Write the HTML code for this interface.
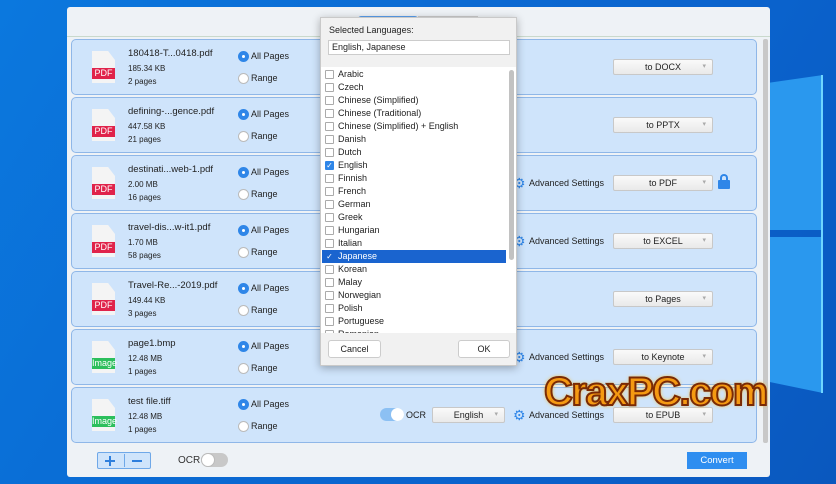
<!DOCTYPE html>
<html><head><meta charset="utf-8"><style>
*{box-sizing:border-box;margin:0;padding:0}
body{width:836px;height:484px;overflow:hidden;position:relative;font-family:"Liberation Sans",sans-serif;background:linear-gradient(120deg,#0b78de 0%,#0a6ad3 40%,#0a62cc 70%,#0a58be 100%)}
.a{position:absolute}
.win{left:67px;top:7px;width:703px;height:470px;background:#eef2f6;border-radius:3px}
.row{left:71px;width:686px;height:56px;background:#cfe4fb;border:1px solid #8fb7e8;border-radius:5px}
.doc{width:23px;height:32px;background:#f4f4f4;clip-path:polygon(0 0,70% 0,100% 28%,100% 100%,0 100%)}
.lbl{width:23px;height:11px;color:#fff;font-size:9px;line-height:11px;text-align:center}
.fn{font-size:9.5px;color:#222}
.sm{font-size:8px;color:#222}
.rad{width:11px;height:11px;border-radius:50%;background:#fff;border:1px solid #bbb}
.rad.on{background:#2f86e8;border-color:#2f86e8}
.rad.on::after{content:"";position:absolute;left:3px;top:3px;width:3px;height:3px;border-radius:50%;background:#fff}
.rt{font-size:9px;color:#222}
.dd{width:100px;height:16px;background:linear-gradient(#fafafa,#e9e9e9);border:1px solid #c8c8c8;border-radius:2px;font-size:9px;text-align:center;line-height:14px;color:#222}
.dd::after{content:"▾";position:absolute;right:6px;top:0;font-size:7px;color:#aaa}
.gear{width:12px;height:12px;color:#2f86e8;font-size:14px;line-height:12px}
.adv{font-size:9px;color:#222}
.pop{left:320px;top:17px;width:197px;height:349px;background:#f1f1f1;border:1px solid #c9c9c9;box-shadow:0 2px 8px rgba(0,0,0,.3)}
.it{left:1px;width:184px;height:13px;font-size:9px;line-height:13px;color:#222;padding-left:16px}
.it i{position:absolute;left:3px;top:2px;width:9px;height:9px;border:1px solid #aaa;background:#fff;border-radius:1px;font-style:normal}
.btn{height:18px;background:#fff;border:1px solid #ccc;border-radius:3px;font-size:9px;text-align:center;line-height:16px;color:#222}
</style></head><body>
<div class="a" style="left:760px;top:0;width:63px;height:400px;background:#2a98ee;clip-path:polygon(0 84px,100% 75px,100% 230px,0 230px,0 237px,100% 237px,100% 393px,0 380px)"></div>
<div class="a" style="left:821px;top:75px;width:2px;height:318px;background:#6fd6ff"></div>
<div class="a win"></div>
<div class="a" style="left:67px;top:36px;width:703px;height:1px;background:#c9d9cc"></div>
<div class="a" style="left:763px;top:39px;width:5px;height:404px;background:#c8c8c8;border-radius:2px"></div>
<div class="a" style="left:358px;top:16px;width:60px;height:6px;background:#5aa0ee;border-radius:3px 3px 0 0"></div>
<div class="a" style="left:418px;top:16px;width:60px;height:6px;background:#fff;border:1px solid #ccc"></div>

<div class="a row" style="top:39px"></div><div class="a row" style="top:97px"></div><div class="a row" style="top:155px"></div><div class="a row" style="top:213px"></div><div class="a row" style="top:271px"></div><div class="a row" style="top:329px"></div><div class="a row" style="top:387px"></div>

<div class="a doc" style="left:92px;top:51px"></div><div class="a lbl" style="left:92px;top:68px;background:#e0234a">PDF</div>
<div class="a fn" style="left:128px;top:48px">180418-T...0418.pdf</div><div class="a sm" style="left:128px;top:64px">185.34 KB</div><div class="a sm" style="left:128px;top:77px">2 pages</div>
<div class="a doc" style="left:92px;top:109px"></div><div class="a lbl" style="left:92px;top:126px;background:#e0234a">PDF</div>
<div class="a fn" style="left:128px;top:106px">defining-...gence.pdf</div><div class="a sm" style="left:128px;top:122px">447.58 KB</div><div class="a sm" style="left:128px;top:135px">21 pages</div>
<div class="a doc" style="left:92px;top:167px"></div><div class="a lbl" style="left:92px;top:184px;background:#e0234a">PDF</div>
<div class="a fn" style="left:128px;top:164px">destinati...web-1.pdf</div><div class="a sm" style="left:128px;top:180px">2.00 MB</div><div class="a sm" style="left:128px;top:193px">16 pages</div>
<div class="a doc" style="left:92px;top:225px"></div><div class="a lbl" style="left:92px;top:242px;background:#e0234a">PDF</div>
<div class="a fn" style="left:128px;top:222px">travel-dis...w-it1.pdf</div><div class="a sm" style="left:128px;top:238px">1.70 MB</div><div class="a sm" style="left:128px;top:251px">58 pages</div>
<div class="a doc" style="left:92px;top:283px"></div><div class="a lbl" style="left:92px;top:300px;background:#e0234a">PDF</div>
<div class="a fn" style="left:128px;top:280px">Travel-Re...-2019.pdf</div><div class="a sm" style="left:128px;top:296px">149.44 KB</div><div class="a sm" style="left:128px;top:309px">3 pages</div>
<div class="a doc" style="left:92px;top:341px"></div><div class="a lbl" style="left:92px;top:358px;background:#2cbf5c">Image</div>
<div class="a fn" style="left:128px;top:338px">page1.bmp</div><div class="a sm" style="left:128px;top:354px">12.48 MB</div><div class="a sm" style="left:128px;top:367px">1 pages</div>
<div class="a doc" style="left:92px;top:399px"></div><div class="a lbl" style="left:92px;top:416px;background:#2cbf5c">Image</div>
<div class="a fn" style="left:128px;top:396px">test file.tiff</div><div class="a sm" style="left:128px;top:412px">12.48 MB</div><div class="a sm" style="left:128px;top:425px">1 pages</div>

<div class="a rad on" style="left:238px;top:51px"></div><div class="a rt" style="left:251px;top:51px">All Pages</div><div class="a rad" style="left:238px;top:73px"></div><div class="a rt" style="left:251px;top:73px">Range</div>
<div class="a rad on" style="left:238px;top:109px"></div><div class="a rt" style="left:251px;top:109px">All Pages</div><div class="a rad" style="left:238px;top:131px"></div><div class="a rt" style="left:251px;top:131px">Range</div>
<div class="a rad on" style="left:238px;top:167px"></div><div class="a rt" style="left:251px;top:167px">All Pages</div><div class="a rad" style="left:238px;top:189px"></div><div class="a rt" style="left:251px;top:189px">Range</div>
<div class="a rad on" style="left:238px;top:225px"></div><div class="a rt" style="left:251px;top:225px">All Pages</div><div class="a rad" style="left:238px;top:247px"></div><div class="a rt" style="left:251px;top:247px">Range</div>
<div class="a rad on" style="left:238px;top:283px"></div><div class="a rt" style="left:251px;top:283px">All Pages</div><div class="a rad" style="left:238px;top:305px"></div><div class="a rt" style="left:251px;top:305px">Range</div>
<div class="a rad on" style="left:238px;top:341px"></div><div class="a rt" style="left:251px;top:341px">All Pages</div><div class="a rad" style="left:238px;top:363px"></div><div class="a rt" style="left:251px;top:363px">Range</div>
<div class="a rad on" style="left:238px;top:399px"></div><div class="a rt" style="left:251px;top:399px">All Pages</div><div class="a rad" style="left:238px;top:421px"></div><div class="a rt" style="left:251px;top:421px">Range</div>

<div class="a dd" style="left:613px;top:59px">to DOCX</div>
<div class="a dd" style="left:613px;top:117px">to PPTX</div>
<div class="a dd" style="left:613px;top:175px">to PDF</div>
<div class="a dd" style="left:613px;top:233px">to EXCEL</div>
<div class="a dd" style="left:613px;top:291px">to Pages</div>
<div class="a dd" style="left:613px;top:349px">to Keynote</div>
<div class="a dd" style="left:613px;top:407px">to EPUB</div>
<div class="a" style="left:718px;top:180px;width:12px;height:9px;background:#2f86e8;border-radius:1px"></div>
<div class="a" style="left:720px;top:174px;width:8px;height:8px;border:2px solid #2f86e8;border-bottom:none;border-radius:4px 4px 0 0"></div>

<div class="a gear" style="left:513px;top:177px">⚙</div><div class="a adv" style="left:529px;top:178px">Advanced Settings</div>
<div class="a gear" style="left:513px;top:235px">⚙</div><div class="a adv" style="left:529px;top:236px">Advanced Settings</div>
<div class="a gear" style="left:513px;top:351px">⚙</div><div class="a adv" style="left:529px;top:352px">Advanced Settings</div>
<div class="a gear" style="left:513px;top:409px">⚙</div><div class="a adv" style="left:529px;top:410px">Advanced Settings</div>

<div class="a" style="left:380px;top:408px;width:24px;height:13px;border-radius:7px;background:#8cc0f3"></div>
<div class="a" style="left:391px;top:408px;width:13px;height:13px;border-radius:50%;background:#fff"></div>
<div class="a rt" style="left:406px;top:410px">OCR</div>
<div class="a dd" style="left:432px;top:407px;width:73px">English</div>

<div class="a" style="left:97px;top:452px;width:54px;height:17px;background:#cfe4fb;border:1px solid #6fa8e8;border-radius:2px"></div>
<div class="a" style="left:124px;top:454px;width:1px;height:13px;background:#6fa8e8"></div>
<div class="a" style="left:105px;top:460px;width:10px;height:1.5px;background:#2f7fdd"></div>
<div class="a" style="left:109.3px;top:456px;width:1.5px;height:10px;background:#2f7fdd"></div>
<div class="a" style="left:132px;top:460px;width:10px;height:1.5px;background:#2f7fdd"></div>
<div class="a rt" style="left:178px;top:455px;font-size:10px;color:#333">OCR</div>
<div class="a" style="left:201px;top:453px;width:27px;height:14px;border-radius:7px;background:#c8c8c8"></div>
<div class="a" style="left:201px;top:453px;width:14px;height:14px;border-radius:50%;background:#fff;border:1px solid #bbb"></div>
<div class="a" style="left:687px;top:452px;width:60px;height:17px;background:#2f8ef0;color:#fff;font-size:9.5px;text-align:center;line-height:17px">Convert</div>

<div class="a pop"></div>
<div class="a" style="left:329px;top:25px;font-size:9px;color:#222">Selected Languages:</div>
<div class="a" style="left:328px;top:40px;width:182px;height:15px;background:#fff;border:1px solid #ccc;font-size:9px;line-height:13px;padding-left:3px;color:#222">English, Japanese</div>
<div class="a" style="left:321px;top:67px;width:195px;height:266px;background:#fff;overflow:hidden">
<div class="a it" style="top:1px"><i></i>Arabic</div>
<div class="a it" style="top:14px"><i></i>Czech</div>
<div class="a it" style="top:27px"><i></i>Chinese (Simplified)</div>
<div class="a it" style="top:40px"><i></i>Chinese (Traditional)</div>
<div class="a it" style="top:53px"><i></i>Chinese (Simplified) + English</div>
<div class="a it" style="top:66px"><i></i>Danish</div>
<div class="a it" style="top:79px"><i></i>Dutch</div>
<div class="a it" style="top:92px"><i style="background:#2f86e8;border-color:#2f86e8;color:#fff;font-size:8px;line-height:7px;text-align:center">✓</i>English</div>
<div class="a it" style="top:105px"><i></i>Finnish</div>
<div class="a it" style="top:118px"><i></i>French</div>
<div class="a it" style="top:131px"><i></i>German</div>
<div class="a it" style="top:144px"><i></i>Greek</div>
<div class="a it" style="top:157px"><i></i>Hungarian</div>
<div class="a it" style="top:170px"><i></i>Italian</div>
<div class="a it" style="top:183px;background:#1a64cf;color:#fff"><i style="background:#1a64cf;border-color:#1a64cf;color:#fff;font-size:8px;line-height:7px;text-align:center">✓</i>Japanese</div>
<div class="a it" style="top:196px"><i></i>Korean</div>
<div class="a it" style="top:209px"><i></i>Malay</div>
<div class="a it" style="top:222px"><i></i>Norwegian</div>
<div class="a it" style="top:235px"><i></i>Polish</div>
<div class="a it" style="top:248px"><i></i>Portuguese</div>
<div class="a it" style="top:261px"><i></i>Romanian</div>
<div class="a" style="left:188px;top:3px;width:5px;height:190px;background:#c2c2c2;border-radius:3px"></div>
</div>
<div class="a btn" style="left:328px;top:340px;width:53px">Cancel</div>
<div class="a btn" style="left:458px;top:340px;width:52px">OK</div>

<div class="a" style="left:544px;top:370px;font:bold 40px 'Liberation Sans',sans-serif;color:#f59a12;-webkit-text-stroke:2px #7a2a05;letter-spacing:-1.5px;text-shadow:0 0 4px #ffb400">CraxPC.com</div>
</body></html>
